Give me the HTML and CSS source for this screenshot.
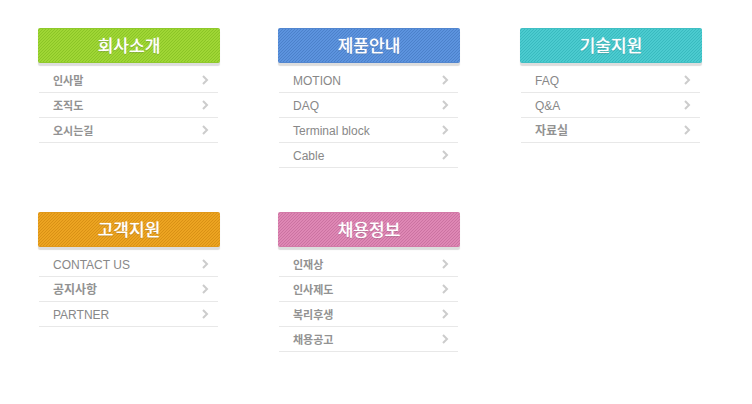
FILE: index.html
```html
<!DOCTYPE html>
<html lang="ko">
<head>
<meta charset="utf-8">
<meta name="viewport" content="width=device-width, initial-scale=1">
<title>사이트맵</title>
<link rel="stylesheet" href="styles.css">
</head>
<body>
<svg class="defs" aria-hidden="true"><symbol id="chevron" viewBox="0 0 7 10"><path d="M1 1L5 5L1 9" fill="none" stroke="#cccccc" stroke-width="2"/></symbol></svg>
<main class="sitemap">
  <section class="menu menu-company">
    <h2 class="title">회사소개</h2>
    <ul class="list">
      <li><a href="#">인사말<svg class="arrow"><use href="#chevron"/></svg></a></li>
      <li><a href="#">조직도<svg class="arrow"><use href="#chevron"/></svg></a></li>
      <li><a href="#">오시는길<svg class="arrow"><use href="#chevron"/></svg></a></li>
    </ul>
  </section>
  <section class="menu menu-product">
    <h2 class="title">제품안내</h2>
    <ul class="list latin">
      <li><a href="#">MOTION<svg class="arrow"><use href="#chevron"/></svg></a></li>
      <li><a href="#">DAQ<svg class="arrow"><use href="#chevron"/></svg></a></li>
      <li><a href="#">Terminal block<svg class="arrow"><use href="#chevron"/></svg></a></li>
      <li><a href="#">Cable<svg class="arrow"><use href="#chevron"/></svg></a></li>
    </ul>
  </section>
  <section class="menu menu-tech">
    <h2 class="title">기술지원</h2>
    <ul class="list latin">
      <li><a href="#">FAQ<svg class="arrow"><use href="#chevron"/></svg></a></li>
      <li><a href="#">Q&amp;A<svg class="arrow"><use href="#chevron"/></svg></a></li>
      <li><a href="#"><span class="strong">자료실</span><svg class="arrow"><use href="#chevron"/></svg></a></li>
    </ul>
  </section>
  <section class="menu menu-support">
    <h2 class="title">고객지원</h2>
    <ul class="list latin">
      <li><a href="#">CONTACT US<svg class="arrow"><use href="#chevron"/></svg></a></li>
      <li><a href="#"><span class="strong">공지사항</span><svg class="arrow"><use href="#chevron"/></svg></a></li>
      <li><a href="#">PARTNER<svg class="arrow"><use href="#chevron"/></svg></a></li>
    </ul>
  </section>
  <section class="menu menu-career">
    <h2 class="title">채용정보</h2>
    <ul class="list">
      <li><a href="#">인재상<svg class="arrow"><use href="#chevron"/></svg></a></li>
      <li><a href="#">인사제도<svg class="arrow"><use href="#chevron"/></svg></a></li>
      <li><a href="#">복리후생<svg class="arrow"><use href="#chevron"/></svg></a></li>
      <li><a href="#">채용공고<svg class="arrow"><use href="#chevron"/></svg></a></li>
    </ul>
  </section>
</main>
</body>
</html>
```
FILE: styles.css
```css
* {
  box-sizing: border-box;
}

body {
  margin: 0;
  background: #ffffff;
  color: #888888;
  font-family: "Liberation Sans", "Noto Sans CJK KR", sans-serif;
}

.defs {
  display: none;
}

.sitemap {
  display: grid;
  grid-template-columns: 182fr 184fr 182fr;
  gap: 44px 58px;
  padding: 28px 50px 28px 38px;
}

.menu:nth-child(3n + 2) {
  padding-right: 2px;
}

.title {
  margin: 0 0 5px;
  height: 35px;
  padding-top: 2px;
  border-radius: 2px;
  background-color: var(--base);
  background-image: linear-gradient(135deg, transparent 40%, var(--stripe) 40% 60%, transparent 60%);
  background-size: 3px 3px;
  box-shadow: inset 0 1px 0 var(--edge), inset 0 -1px 0 var(--edge), 0 3px 1px #dddddd;
  color: #ffffff;
  font-size: 17px;
  font-weight: 400;
  line-height: 34px;
  text-align: center;
  text-shadow: 0 0 1px #ffffff, 0 1px 1px rgba(0, 0, 0, 0.2);
}

.menu-company {
  --base: #9fd635;
  --stripe: #8bc526;
  --edge: #8fc92b;
}

.menu-product {
  --base: #5c93de;
  --stripe: #4c81ca;
  --edge: #5286cf;
}

.menu-tech {
  --base: #4bcbcf;
  --stripe: #39babf;
  --edge: #40bfc4;
}

.menu-support {
  --base: #eca421;
  --stripe: #d99115;
  --edge: #e0981a;
}

.menu-career {
  --base: #de87b4;
  --stripe: #cb73a1;
  --edge: #d27aa7;
}

.list {
  margin: 0 2px 0 1px;
  padding: 0;
  list-style: none;
  font-size: 11px;
  font-weight: 700;
}

.latin {
  font-size: 12px;
  font-weight: 400;
}

.strong {
  font-weight: 700;
}

.list a {
  display: flex;
  align-items: center;
  justify-content: space-between;
  height: 25px;
  padding: 1px 9px 0 14px;
  border-bottom: 1px solid #e8e8e8;
  color: inherit;
  line-height: 24px;
  text-decoration: none;
}

.list:not(.latin) a,
.strong {
  color: #929292;
}

.arrow {
  flex: none;
  width: 7px;
  height: 10px;
  margin-bottom: 1px;
}
```
